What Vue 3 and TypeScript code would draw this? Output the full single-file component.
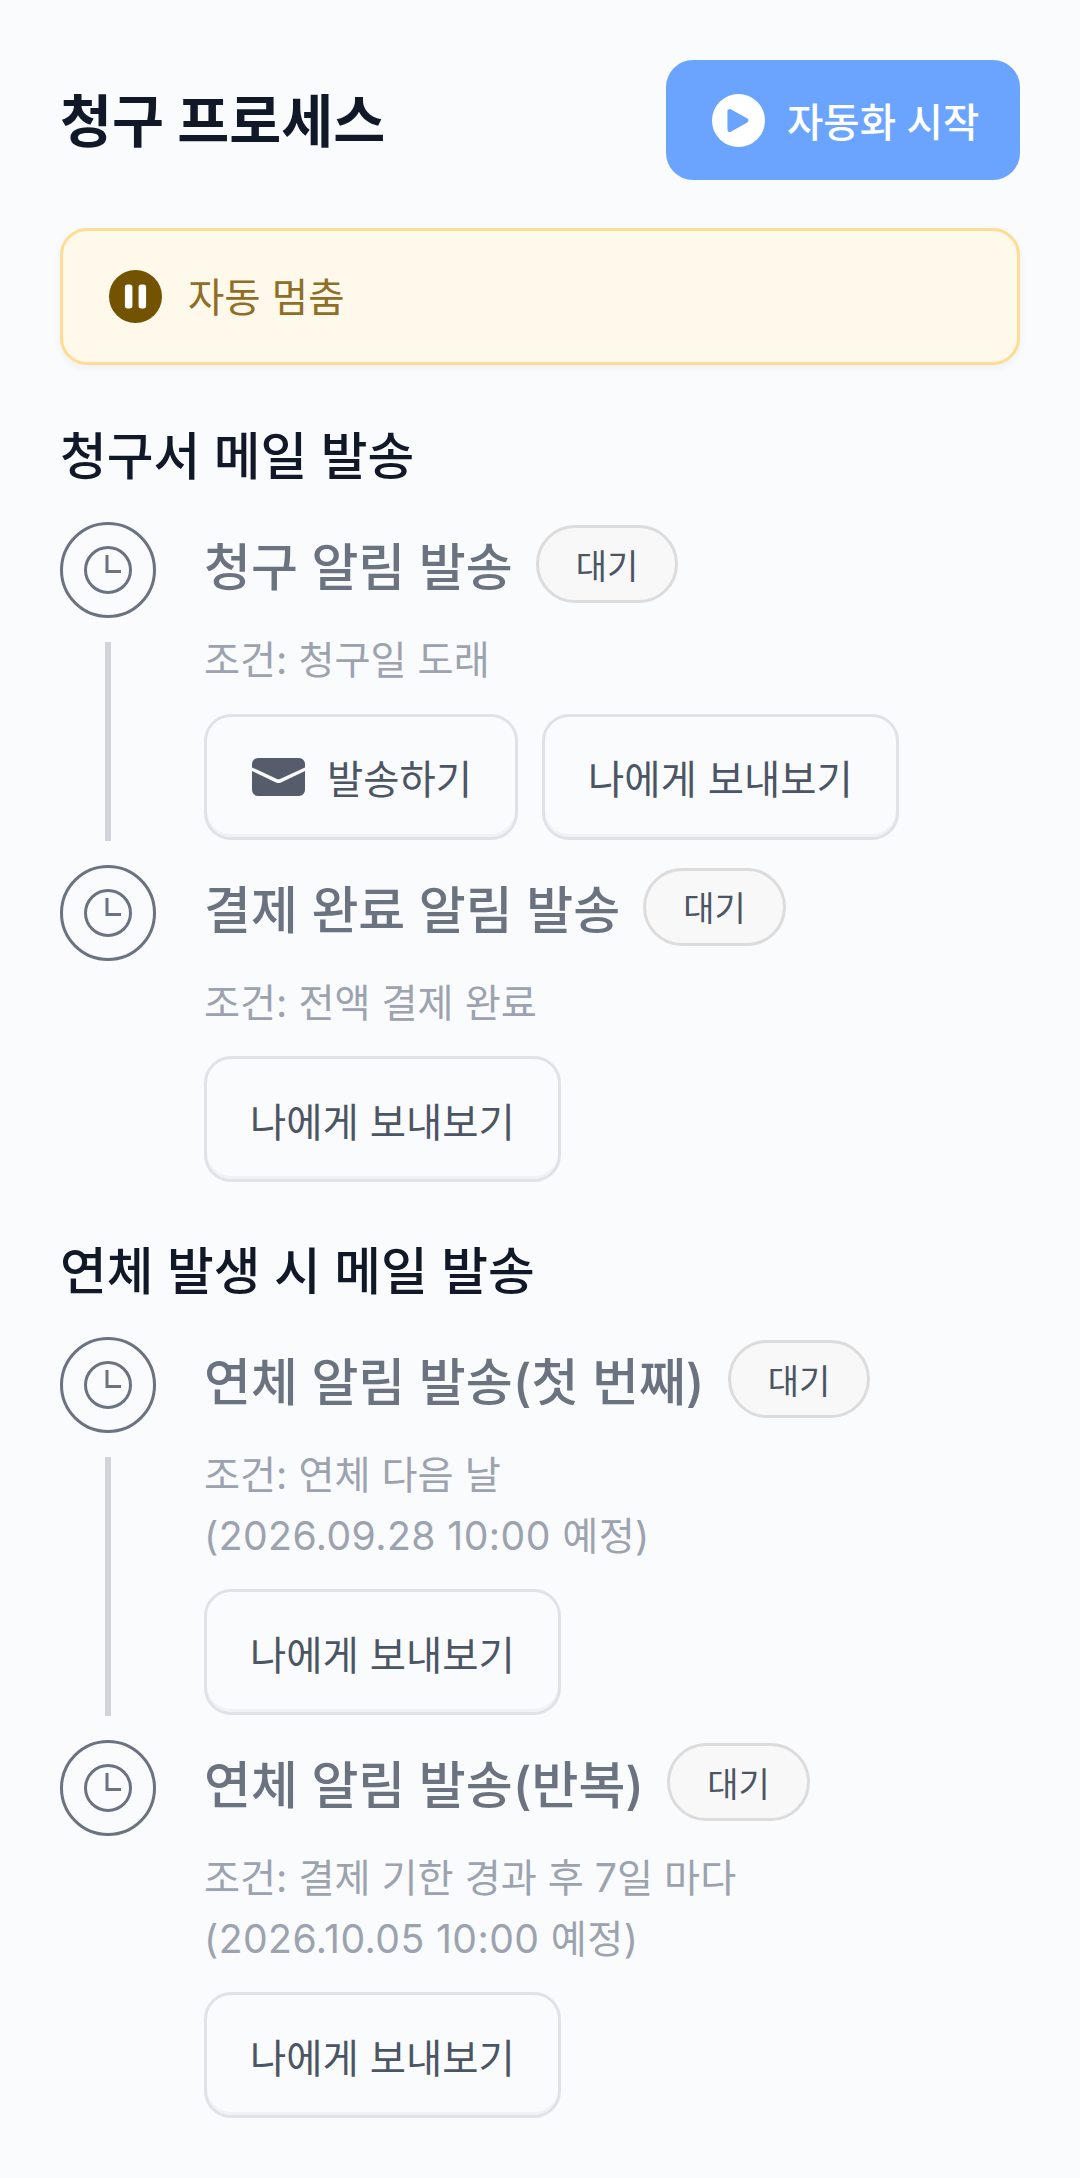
<template>
  <div class="page">
    <header class="head">
      <h1 class="title">청구 프로세스</h1>
      <button type="button" class="start">
        <svg class="start-icon" viewBox="0 0 24 24">
          <circle cx="12" cy="12" r="12" fill="#fff" />
          <path d="M7 7.800v8.400c0 .8.800 1.300 1.500.9l7.500-4.200c.7-.4.700-1.400 0-1.800L8.500 6.900C7.800 6.500 7 7 7 7.800z" fill="#6ba4ff" />
        </svg>
        <span class="start-label">자동화 시작</span>
      </button>
    </header>

    <div class="notice">
      <svg class="notice-icon" viewBox="0 0 24 24">
        <circle cx="12" cy="12" r="12" fill="#735200" />
        <rect x="7.200" y="6.600" width="3.400" height="10.800" rx="1.200" fill="#fff" />
        <rect x="13.400" y="6.600" width="3.400" height="10.800" rx="1.200" fill="#fff" />
      </svg>
      <span class="notice-label">자동 멈춤</span>
    </div>

    <section v-for="group in groups" :key="group.name" class="group">
      <h2 class="group-name">{{ group.name }}</h2>
      <div v-for="(step, i) in group.steps" :key="step.title" class="step">
        <div class="rail">
          <svg class="clock" viewBox="0 0 96 96" fill="none" stroke="#6b7280" stroke-width="3">
            <circle cx="48" cy="48" r="46.500" />
            <circle cx="48" cy="48" r="22.500" />
            <path d="M47 33v16.500h14" />
          </svg>
          <span v-if="i < group.steps.length - 1" class="line"></span>
        </div>
        <div class="body">
          <div class="step-head">
            <span class="step-title">{{ step.title }}</span>
            <span class="chip">대기</span>
          </div>
          <p class="cond">
            <span v-for="t in step.cond" :key="t" class="cond-line" :class="{ date: t.startsWith('(') }">{{ t }}</span>
          </p>
          <div class="actions">
            <button v-if="step.send" type="button" class="act">
              <svg class="mail" viewBox="0 0 53 38">
                <path d="M0 6a6 6 0 0 1 6-6h41a6 6 0 0 1 6 6v3.400L28 21a4 4 0 0 1-3 0L0 9.400z" fill="#555d6c" />
                <path d="M0 13l24 11.500a6 6 0 0 0 5 0L53 13v19a6 6 0 0 1-6 6H6a6 6 0 0 1-6-6z" fill="#555d6c" />
              </svg>
              <span>발송하기</span>
            </button>
            <button type="button" class="act"><span>나에게 보내보기</span></button>
          </div>
        </div>
      </div>
    </section>
  </div>
</template>

<script setup lang="ts">
interface Step {
  title: string
  cond: string[]
  send?: boolean
}

const groups: { name: string; steps: Step[] }[] = [
  {
    name: '청구서 메일 발송',
    steps: [
      { title: '청구 알림 발송', cond: ['조건: 청구일 도래'], send: true },
      { title: '결제 완료 알림 발송', cond: ['조건: 전액 결제 완료'] }
    ]
  },
  {
    name: '연체 발생 시 메일 발송',
    steps: [
      { title: '연체 알림 발송(첫 번째)', cond: ['조건: 연체 다음 날', '(2026.09.28 10:00 예정)'] },
      { title: '연체 알림 발송(반복)', cond: ['조건: 결제 기한 경과 후 7일 마다', '(2026.10.05 10:00 예정)'] }
    ]
  }
]
</script>

<style>
html,
body {
  background: #fafbfd;
}
</style>

<style scoped>
.page {
  box-sizing: border-box;
  width: 1080px;
  min-height: 2178px;
  padding: 60px 60px 0;
  background: #fafbfd;
  font-family: Inter, 'Noto Sans CJK KR', sans-serif;
}
.head {
  display: flex;
  align-items: center;
  justify-content: space-between;
}
.title {
  margin: 0 0 6px;
  font-size: 56.5px;
  font-weight: 700;
  color: #111827;
}
.start {
  display: flex;
  align-items: center;
  gap: 22px;
  box-sizing: border-box;
  width: 354px;
  height: 120px;
  padding: 0 0 0 46px;
  border: 0;
  border-radius: 27px;
  background: #6ba4ff;
  color: #fff;
  font: 500 39.5px Inter, 'Noto Sans CJK KR', sans-serif;
  white-space: nowrap;
}
.start-label {
  margin-bottom: 2px;
}
.start-icon {
  flex: none;
  width: 53px;
  height: 53px;
}
.notice {
  display: flex;
  align-items: center;
  gap: 26px;
  box-sizing: border-box;
  height: 137px;
  margin-top: 48px;
  padding: 0 46px;
  border: 3px solid #ffdc94;
  border-radius: 27px;
  background: #fff9ec;
  box-shadow: 0 3px 8px rgba(0, 0, 0, 0.05);
  color: #8f6f27;
  font-size: 39.5px;
}
.notice-label {
  margin-bottom: 4px;
}
.notice-icon {
  flex: none;
  width: 53px;
  height: 53px;
}
.group {
  margin-top: 62px;
}
.group + .group {
  margin-top: 35px;
}
.group-name {
  margin: 0 0 35px;
  font-size: 50.8px;
  line-height: 60px;
  font-weight: 500;
  color: #111827;
}
.step {
  display: flex;
  gap: 48px;
}
.rail {
  display: flex;
  flex-direction: column;
  align-items: center;
  flex: none;
  width: 96px;
}
.clock {
  display: block;
  flex: none;
  width: 96px;
  height: 96px;
}
.line {
  flex: 1;
  width: 6px;
  margin: 24px 0;
  background: #d1d5db;
}
.body {
  flex: 1;
  padding-bottom: 25px;
}
.step-head {
  display: flex;
  align-items: center;
  gap: 23px;
  height: 78px;
  margin-top: 3px;
}
.step-title {
  font-size: 51px;
  font-weight: 500;
  color: #6b7280;
}
.chip {
  display: flex;
  align-items: center;
  box-sizing: border-box;
  height: 78px;
  padding: 0 37px;
  border: 3px solid #dcdcdc;
  border-radius: 39px;
  background: #f8f8f8;
  color: #4b5563;
  font-size: 34px;
  font-weight: 400;
}
.cond {
  margin: 27px 0 0;
  color: #9ca3af;
  font-size: 39.2px;
  line-height: 60.5px;
}
.cond-line {
  display: block;
}
.cond-line.date {
  letter-spacing: 0.4px;
}
.actions {
  display: flex;
  gap: 24px;
  margin-top: 23px;
}
.act {
  display: flex;
  align-items: center;
  gap: 22px;
  box-sizing: border-box;
  height: 126px;
  padding: 0 43px;
  border: 3px solid #e0e2e8;
  border-radius: 27px;
  background: #fafbfd;
  box-shadow: inset 0 -3px 0 #f1f2f5;
  color: #4b5563;
  font: 400 39.4px Inter, 'Noto Sans CJK KR', sans-serif;
}
.mail {
  flex: none;
  width: 53px;
  height: 38px;
  margin-left: 2px;
}
</style>
